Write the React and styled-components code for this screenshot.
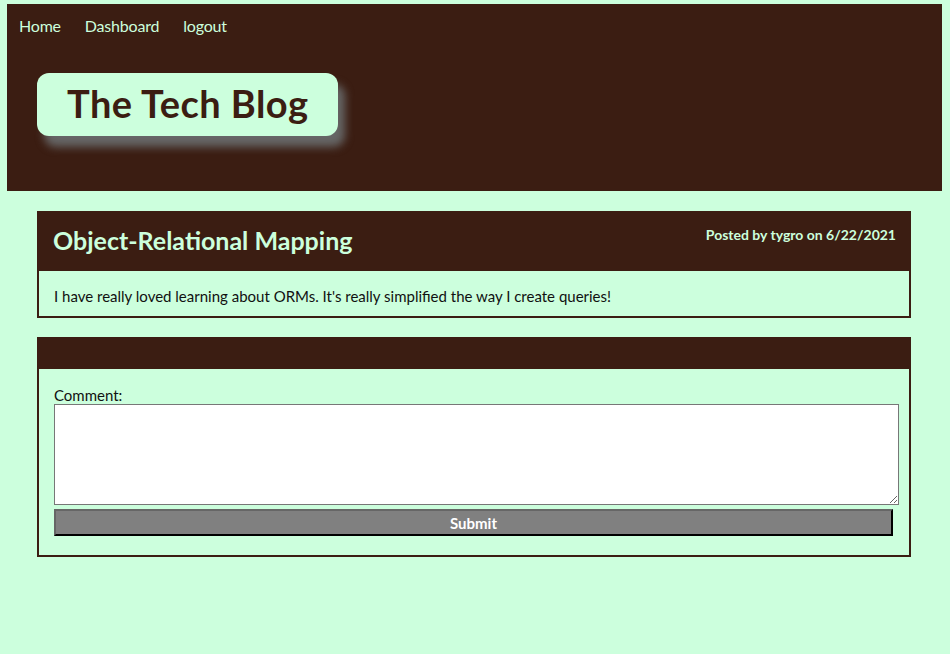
import React from "react";
import styled, { createGlobalStyle } from "styled-components";

const dark = "#3b1d12";
const mint = "#ccffdd";

const GlobalStyle = createGlobalStyle`
  html, body {
    margin: 0;
    padding: 0;
    background: ${mint};
    font-family: "Lato", "Open Sans", sans-serif;
  }
`;

const Page = styled.div`
  padding: 4px 8px 40px 7px;
`;

const Header = styled.header`
  background: ${dark};
  height: 187px;
  box-sizing: border-box;
  padding: 12px 12px 0;
`;

const Nav = styled.nav`
  display: flex;
  gap: 24px;
  a {
    color: ${mint};
    text-decoration: none;
    font-size: 16px;
    letter-spacing: -0.2px;
  }
`;

const TitleBox = styled.div`
  display: inline-block;
  margin: 38px 0 0 18px;
  padding: 7px 29px 9px 30px;
  background: ${mint};
  border-radius: 12px;
  box-shadow: 7px 11px 9px #666;
  h1 {
    margin: 0;
    color: ${dark};
    font-size: 38px;
    line-height: 47px;
    font-weight: 700;
    letter-spacing: 0.45px;
  }
`;

const Main = styled.main`
  padding: 20px 31px 0 30px;
  display: flex;
  flex-direction: column;
  gap: 19px;
`;

const Card = styled.section`
  border: 2px solid ${dark};
  background: ${mint};
`;

const CardHeader = styled.div`
  background: ${dark};
  color: ${mint};
  height: ${(p) => p.$h}px;
  display: flex;
  justify-content: space-between;
  align-items: flex-start;
  padding: 0 13px 0 14px;
  h2 {
    margin: 12px 0 0;
    font-size: 25px;
    font-weight: 700;
  }
  span {
    margin-top: 13px;
    font-size: 14px;
    font-weight: 700;
  }
`;

const CardBody = styled.div`
  padding: ${(p) => p.$pad};
  color: #111;
  font-size: 15px;
  line-height: 18px;
`;

const Label = styled.label`
  display: block;
  font-size: 15px;
  line-height: 17px;
`;

const TextArea = styled.textarea`
  display: block;
  box-sizing: border-box;
  width: 845px;
  height: 101px;
  border: 1px solid #777;
  background: #fff;
  margin: 0;
`;

const SubmitButton = styled.button`
  display: block;
  box-sizing: border-box;
  width: 839px;
  height: 27px;
  margin-top: 4px;
  background: #808080;
  color: #fff;
  font-family: inherit;
  font-size: 15px;
  font-weight: 700;
  border: 2px outset #666;
  border-right-color: #222;
  border-bottom-color: #222;
  padding: 0;
`;

export default function App() {
  return (
    <>
      <GlobalStyle />
      <Page>
        <Header>
          <Nav>
            <a href="#">Home</a>
            <a href="#">Dashboard</a>
            <a href="#">logout</a>
          </Nav>
          <TitleBox>
            <h1>The Tech Blog</h1>
          </TitleBox>
        </Header>
        <Main>
          <Card>
            <CardHeader $h={58}>
              <h2>Object-Relational Mapping</h2>
              <span>Posted by tygro on 6/22/2021</span>
            </CardHeader>
            <CardBody $pad="16px 15px 11px">
              I have really loved learning about ORMs. It's really simplified the way I create queries!
            </CardBody>
          </Card>
          <Card>
            <CardHeader $h={30} />
            <CardBody $pad="18px 10px 19px 15px">
              <Label htmlFor="comment">Comment:</Label>
              <TextArea id="comment" />
              <SubmitButton type="button">Submit</SubmitButton>
            </CardBody>
          </Card>
        </Main>
      </Page>
    </>
  );
}
